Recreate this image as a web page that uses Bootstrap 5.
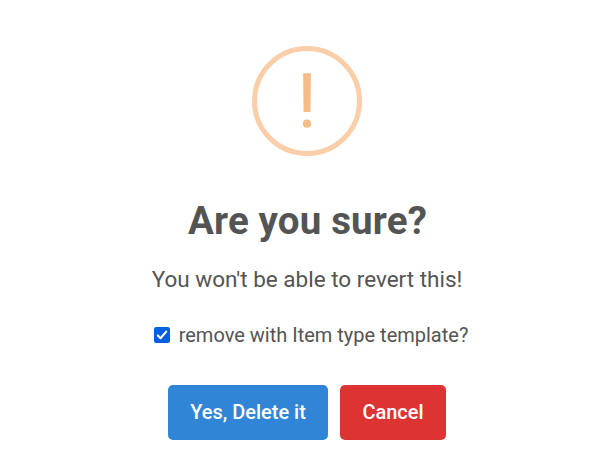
<!DOCTYPE html>
<html lang="en">
<head>
<meta charset="utf-8">
<meta name="viewport" content="width=device-width, initial-scale=1">
<title>Confirm delete</title>
<link href="https://cdn.jsdelivr.net/npm/bootstrap@5.3.0/dist/css/bootstrap.min.css" rel="stylesheet">
<style>
body{font-family:Roboto,sans-serif;color:#545454;background:#fff;height:460px;overflow:hidden}
.dialog-box{width:614px;padding-top:46px}
.warn-icon{width:110px;height:110px;display:block}
.dialog-title{font-size:38.5px;letter-spacing:.15px;line-height:48px;font-weight:700;margin:41px 0 0;padding-left:1px}
.dialog-text{font-size:22.5px;line-height:28px;margin:20px 0 0}
.option-row{font-size:20px;line-height:24px;margin-top:30px;gap:9px;padding-left:8px}
.tick{width:16px;height:16px;display:block}
.actions{gap:12px;margin-top:38px}
.actions .btn{height:55px;border:0;border-radius:5px;font-size:20px;font-weight:500;color:#fff;padding:0 0 2px}
.btn-yes,.btn-yes:hover{width:160px;background:#3085d6}
.btn-no,.btn-no:hover{width:106px;background:#dd3333}
</style>
</head>
<body>
<main class="dialog-box d-flex flex-column align-items-center text-center" role="alertdialog">
<svg class="warn-icon" viewBox="0 0 110 110" aria-hidden="true"><circle cx="55" cy="55" r="52.5" fill="none" stroke="#facea8" stroke-width="5"/><path d="M51.1 27.3h7.8l-.5 38.7h-6.8z" fill="#f8bb86"/><circle cx="55" cy="77.7" r="4.1" fill="#f8bb86"/></svg>
<h2 class="dialog-title">Are you sure?</h2>
<p class="dialog-text">You won't be able to revert this!</p>
<label class="option-row d-flex align-items-center"><svg class="tick" viewBox="0 0 16 16" role="checkbox" aria-checked="true"><rect width="16" height="16" rx="2.2" fill="#0060df"/><path d="M3.8 8.4 6.5 11.2 12.2 4.6" fill="none" stroke="#fff" stroke-width="2.1" stroke-linecap="round" stroke-linejoin="round"/></svg><span>remove with Item type template?</span></label>
<div class="actions d-flex"><button class="btn btn-yes">Yes, Delete it</button><button class="btn btn-no">Cancel</button></div>
</main>
<script src="https://cdn.jsdelivr.net/npm/bootstrap@5.3.0/dist/js/bootstrap.bundle.min.js"></script>
</body>
</html>
